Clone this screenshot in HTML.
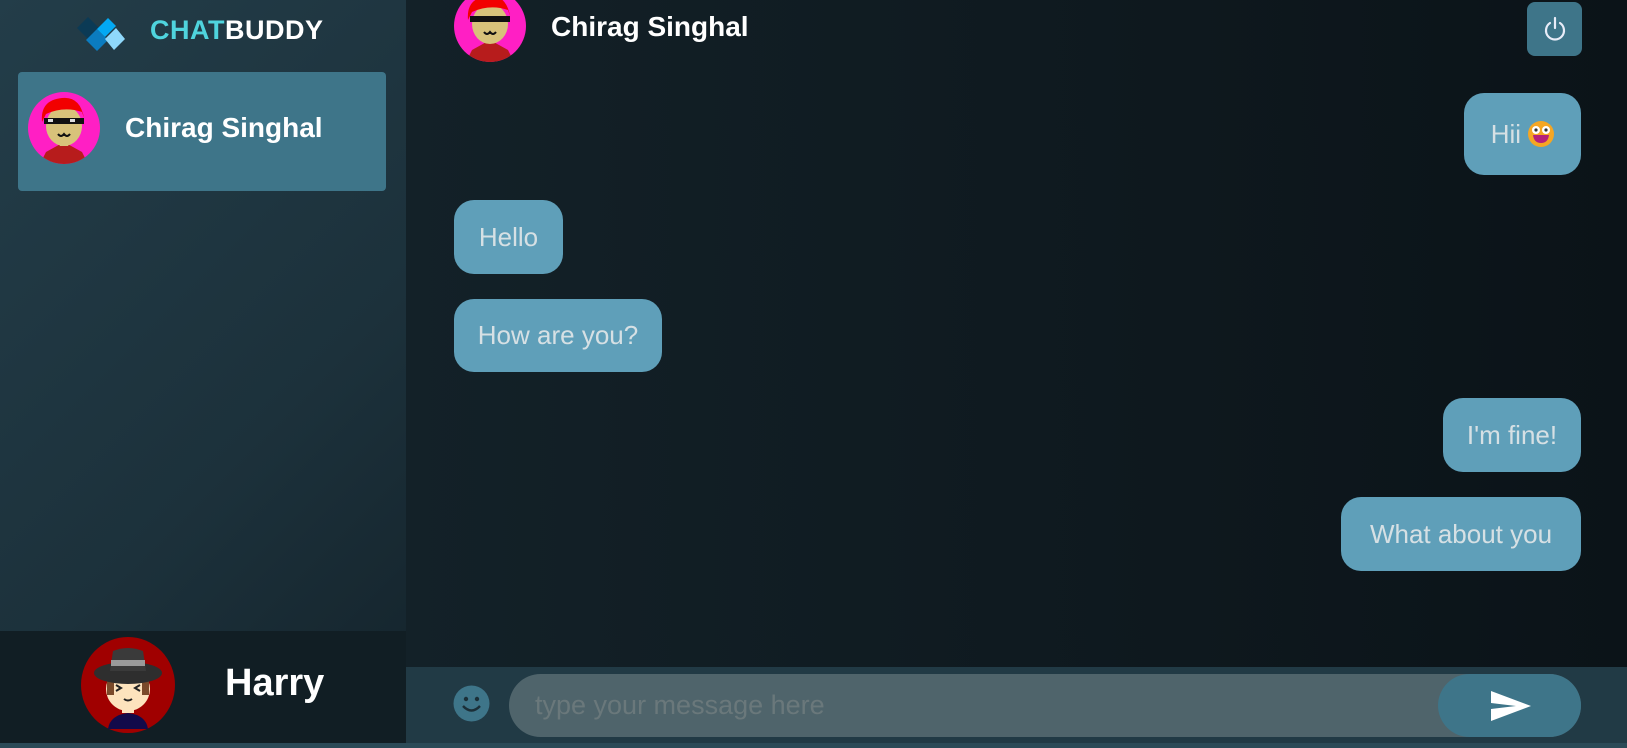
<!DOCTYPE html>
<html><head><meta charset="utf-8"><style>
*{margin:0;padding:0;box-sizing:border-box}
body{width:1627px;height:748px;overflow:hidden;font-family:"Liberation Sans",sans-serif;background:#0e181e;position:relative}
.side{position:absolute;left:0;top:0;width:406px;height:748px;background:linear-gradient(135deg,#233d49 0%,#1c313b 60%,#14232b 100%)}
.main{position:absolute;left:406px;top:0;width:1221px;height:667px;background:linear-gradient(90deg,#132128,#0b1318)}
.abs{position:absolute}
.logo{left:150px;top:15px;font-size:27px;font-weight:bold;color:#fff;letter-spacing:0.5px}
.logo span{color:#4fd4dd}
.card{left:18px;top:72px;width:368px;height:119px;background:#3e7589;border-radius:4px}
.name{color:#fff;font-weight:bold;font-size:28px}
.bub{position:absolute;background:#5f9fb9;color:#d6e0e4;font-size:26px;border-radius:20px;display:flex;align-items:center;justify-content:center}
.user{left:0;top:631px;width:406px;height:112px;background:#111e24}
.bar{left:406px;top:667px;width:1221px;height:76px;background:#213a45}
.strip{left:0;top:743px;width:1627px;height:5px;background:#2b4a57}
</style></head><body>
<div class="side"></div>
<div class="main"></div>
<svg class="abs" style="left:76px;top:16px" width="52" height="38" viewBox="0 0 52 38">
<path d="M1 12 L12 1 L23 12 L12 23Z" fill="#0b3a55"/>
<path d="M10 24 L21 13 L32 24 L21 35Z" fill="#0b7cc0"/>
<path d="M21 13 L32 2 L40 10 L29 21Z" fill="#03a9f4"/>
<path d="M29 23 L40 12 L49 23 L38 34Z" fill="#8fd8fb"/>
</svg>
<div class="abs logo"><span>CHAT</span>BUDDY</div>
<div class="abs card"></div>
<svg class="abs" style="left:28px;top:92px" width="72" height="72" viewBox="0 0 72 72">
<defs><clipPath id="c1"><circle cx="36" cy="36" r="36"/></clipPath></defs>
<g clip-path="url(#c1)"><rect width="72" height="72" fill="#ff1fc4"/>
<path d="M18 60 L36 50 L54 60 L60 72 L12 72Z" fill="#b71c1c"/>
<rect x="32" y="44" width="8" height="10" fill="#d8c27a"/>
<ellipse cx="36" cy="34" rx="18" ry="20" fill="#d8c27a"/>
<path d="M14 30 Q12 8 34 6 Q52 4 56 26 L54 20 Q36 14 18 22Z" fill="#f20000"/>
<rect x="16" y="26" width="40" height="6" fill="#111"/><rect x="20" y="27" width="5" height="3" fill="#ddd"/><rect x="42" y="27" width="5" height="3" fill="#ddd"/>
<path d="M30 42 q3 4 6 0 q3 4 6 0" stroke="#111" stroke-width="2" fill="none"/></g></svg>
<div class="abs name" style="left:125px;top:112px">Chirag Singhal</div>

<svg class="abs" style="left:454px;top:-10px" width="72" height="72" viewBox="0 0 72 72">
<defs><clipPath id="c2"><circle cx="36" cy="36" r="36"/></clipPath></defs>
<g clip-path="url(#c2)"><rect width="72" height="72" fill="#ff1fc4"/>
<path d="M18 60 L36 50 L54 60 L60 72 L12 72Z" fill="#b71c1c"/>
<ellipse cx="36" cy="34" rx="18" ry="20" fill="#d8c27a"/>
<path d="M14 30 Q12 8 34 6 Q52 4 56 26 L54 20 Q36 14 18 22Z" fill="#f20000"/>
<rect x="16" y="26" width="40" height="6" fill="#111"/>
<path d="M30 42 q3 4 6 0 q3 4 6 0" stroke="#111" stroke-width="2" fill="none"/></g></svg>
<div class="abs name" style="left:551px;top:11px">Chirag Singhal</div>

<div class="abs" style="left:1527px;top:2px;width:55px;height:54px;background:#3e7589;border-radius:8px"></div>
<svg class="abs" style="left:1541px;top:15px" width="28" height="28" viewBox="0 0 28 28"><path d="M9 8 A9 9 0 1 0 19 8" stroke="#e8ecf8" stroke-width="2.2" fill="none" stroke-linecap="round"/><path d="M14 3 V13" stroke="#e8ecf8" stroke-width="2.2" stroke-linecap="round"/></svg>

<div class="bub" style="left:1464px;top:93px;width:117px;height:82px">Hii&nbsp;<svg width="26" height="26" viewBox="0 0 26 26"><circle cx="13" cy="13" r="13" fill="#f5a623"/><circle cx="8" cy="9" r="4" fill="#fff"/><circle cx="18" cy="9" r="4" fill="#fff"/><circle cx="8" cy="9" r="1.6" fill="#333"/><circle cx="18" cy="9" r="1.6" fill="#333"/><path d="M5 14 H21 Q20 22 13 22 Q6 22 5 14Z" fill="#b5207a"/></svg></div>
<div class="bub" style="left:454px;top:200px;width:109px;height:74px">Hello</div>
<div class="bub" style="left:454px;top:299px;width:208px;height:73px">How are you?</div>
<div class="bub" style="left:1443px;top:398px;width:138px;height:74px">I'm fine!</div>
<div class="bub" style="left:1341px;top:497px;width:240px;height:74px">What about you</div>

<div class="abs user"></div>
<svg class="abs" style="left:80px;top:637px" width="96" height="96" viewBox="0 0 96 96">
<ellipse cx="48" cy="48" rx="47" ry="48" fill="#a00000"/>
<path d="M28 92 Q30 78 48 76 Q66 78 68 92Z" fill="#120a4a"/>
<rect x="42" y="64" width="12" height="12" fill="#fde3bd"/>
<ellipse cx="48" cy="52" rx="22" ry="22" fill="#fde3bd"/>
<rect x="27" y="40" width="7" height="18" fill="#7a4a2a"/><rect x="62" y="40" width="7" height="18" fill="#7a4a2a"/>
<ellipse cx="48" cy="36" rx="34" ry="11" fill="#2e2e2e"/>
<path d="M30 34 L33 14 Q48 8 63 14 L66 34Z" fill="#3a3a3a"/>
<rect x="31" y="23" width="34" height="6" fill="#9a9a9a"/>
<path d="M36 48 l5 3 l-5 3 M60 48 l-5 3 l5 3" stroke="#222" stroke-width="2" fill="none"/>
<path d="M44 62 q4 3 8 0" stroke="#222" stroke-width="2" fill="none"/></svg>
<div class="abs name" style="left:225px;top:662px;font-size:38px">Harry</div>

<div class="abs bar"></div>
<svg class="abs" style="left:453px;top:685px" width="37" height="37" viewBox="0 0 37 37"><circle cx="18.5" cy="18.5" r="18" fill="#3e7589"/><circle cx="13" cy="14" r="2.2" fill="#1b2f38"/><circle cx="24" cy="14" r="2.2" fill="#1b2f38"/><path d="M10 21 Q18.5 30 27 21" stroke="#1b2f38" stroke-width="2.4" fill="none"/></svg>
<div class="abs" style="left:509px;top:674px;width:1072px;height:63px;background:#4f646b;border-radius:32px"></div>
<div class="abs" style="left:535px;top:690px;font-size:27px;color:#6a787b">type your message here</div>
<div class="abs" style="left:1438px;top:674px;width:143px;height:63px;background:#3e7589;border-radius:32px"></div>
<svg class="abs" style="left:1490px;top:689px" width="42" height="34" viewBox="0 0 42 34"><path d="M1 2 L41 17 L1 32 L1 20 L26 17 L1 14Z" fill="#fff"/></svg>
<div class="abs strip"></div>
</body></html>
